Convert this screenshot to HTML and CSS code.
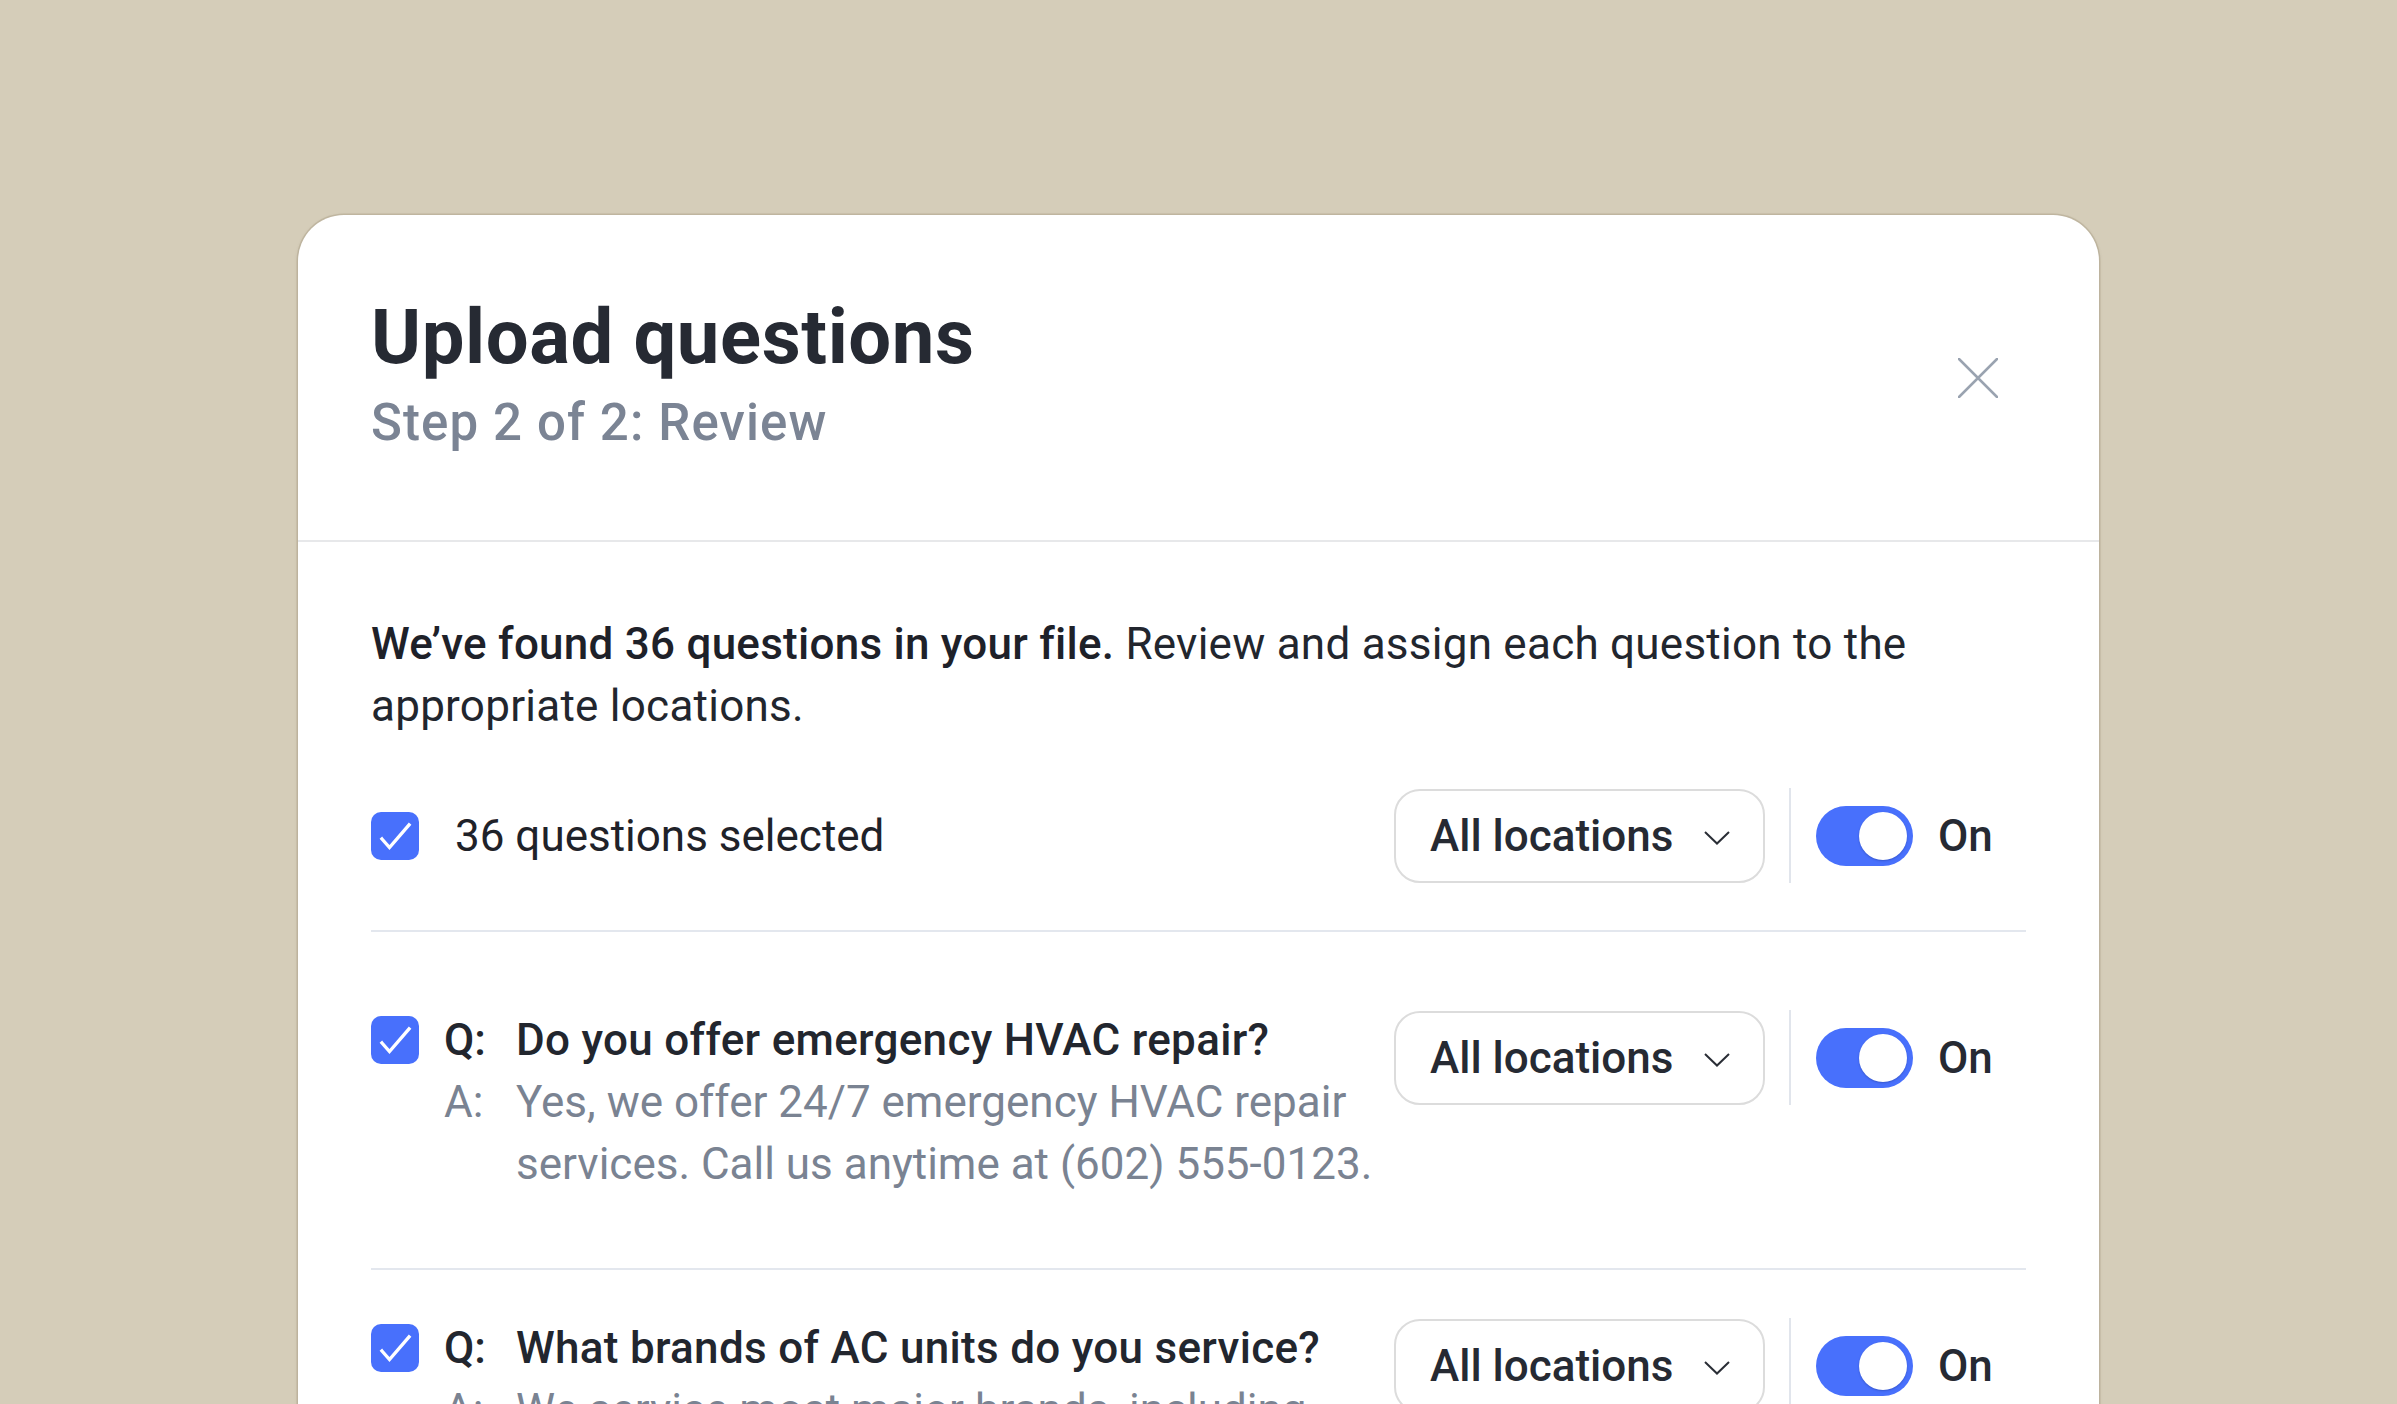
FILE: index.html
```html
<!DOCTYPE html>
<html lang="en">
<head>
<meta charset="utf-8">
<title>Upload questions</title>
<link rel="stylesheet" href="styles.css">
</head>
<body>
<div class="stage">
  <div class="modal">
    <div class="modal-header">
      <div class="heading">
        <h1 class="title">Upload questions</h1>
        <p class="subtitle">Step 2 of 2: Review</p>
      </div>
      <button class="close" aria-label="Close">
        <svg width="40" height="40" viewBox="0 0 40 40"><path d="M1 1 L39 39 M39 1 L1 39" stroke="#9aa3b0" stroke-width="2.5" stroke-linecap="round" fill="none"/></svg>
      </button>
    </div>
    <div class="modal-body">
      <p class="intro"><strong>We’ve found 36 questions in your file.</strong> Review and assign each question to the appropriate locations.</p>

      <div class="select-all">
        <div class="left">
          <span class="checkbox"><svg width="48" height="48" viewBox="0 0 48 48"><path d="M11 27 L18.5 35.5 L38 13" stroke="#fff" stroke-width="3.4" fill="none" stroke-linecap="square"/></svg></span>
          <span class="select-label">36 questions selected</span>
        </div>
        <div class="controls">
          <div class="dropdown"><span>All locations</span><svg width="26" height="14" viewBox="0 0 26 14"><path d="M1 1 L13 12.5 L25 1" stroke="#2a2e36" stroke-width="2" fill="none"/></svg></div>
          <span class="vsep"></span>
          <span class="toggle"><span class="knob"></span></span>
          <span class="toggle-label">On</span>
        </div>
      </div>

      <div class="qa-row first">
        <div class="left">
          <span class="checkbox"><svg width="48" height="48" viewBox="0 0 48 48"><path d="M11 27 L18.5 35.5 L38 13" stroke="#fff" stroke-width="3.4" fill="none" stroke-linecap="square"/></svg></span>
          <div class="qa">
            <div class="q"><span class="lbl">Q:</span><span class="txt">Do you offer emergency HVAC repair?</span></div>
            <div class="a"><span class="lbl">A:</span><span class="txt">Yes, we offer 24/7 emergency HVAC repair services. Call us anytime at (602) 555-0123.</span></div>
          </div>
        </div>
        <div class="controls">
          <div class="dropdown"><span>All locations</span><svg width="26" height="14" viewBox="0 0 26 14"><path d="M1 1 L13 12.5 L25 1" stroke="#2a2e36" stroke-width="2" fill="none"/></svg></div>
          <span class="vsep"></span>
          <span class="toggle"><span class="knob"></span></span>
          <span class="toggle-label">On</span>
        </div>
      </div>

      <div class="qa-row">
        <div class="left">
          <span class="checkbox"><svg width="48" height="48" viewBox="0 0 48 48"><path d="M11 27 L18.5 35.5 L38 13" stroke="#fff" stroke-width="3.4" fill="none" stroke-linecap="square"/></svg></span>
          <div class="qa">
            <div class="q"><span class="lbl">Q:</span><span class="txt">What brands of AC units do you service?</span></div>
            <div class="a"><span class="lbl">A:</span><span class="txt">We service most major brands, including Carrier, Trane, Lennox, Rheem and Goodman.</span></div>
          </div>
        </div>
        <div class="controls">
          <div class="dropdown"><span>All locations</span><svg width="26" height="14" viewBox="0 0 26 14"><path d="M1 1 L13 12.5 L25 1" stroke="#2a2e36" stroke-width="2" fill="none"/></svg></div>
          <span class="vsep"></span>
          <span class="toggle"><span class="knob"></span></span>
          <span class="toggle-label">On</span>
        </div>
      </div>
    </div>
  </div>
</div>
</body>
</html>
```

FILE: styles.css
```css
* { box-sizing: border-box; }

html, body {
  margin: 0;
  padding: 0;
  background: #d5cdb9;
  height: 1404px;
  overflow: hidden;
}

body {
  font-family: Roboto, "Liberation Sans", sans-serif;
  color: #22262e;
}

.stage {
  padding: 215px 0 0 298px;
}

.modal {
  width: 1801px;
  background: #ffffff;
  border-radius: 46px 46px 0 0;
  box-shadow: 0 0 0 1.5px rgba(110, 96, 66, 0.18), 0 1px 4px rgba(80, 70, 40, 0.12);
  min-height: 1300px;
}

.modal-header {
  display: flex;
  justify-content: space-between;
  align-items: flex-start;
  height: 327px;
  padding: 77px 101px 0 73px;
  border-bottom: 2px solid #e7e8ea;
}

.heading { display: flex; flex-direction: column; }

.title {
  margin: 0;
  font-size: 76px;
  line-height: 90px;
  font-weight: 700;
  letter-spacing: 0.6px;
  color: #262a33;
}

.subtitle {
  margin: 11px 0 0;
  font-size: 51px;
  line-height: 60px;
  font-weight: 500;
  color: #7b8494;
  letter-spacing: 1.1px;
}

.close {
  align-self: center;
  margin-top: -77px;
  width: 40px;
  height: 40px;
  padding: 0;
  border: 0;
  background: none;
  display: flex;
}

.modal-body {
  padding: 71px 73px 0 73px;
}

.intro {
  margin: 0;
  font-size: 44px;
  line-height: 62px;
  font-weight: 400;
  letter-spacing: 0.25px;
  color: #22262e;
}

.intro strong { font-weight: 500; color: #1e2129; }

.select-all {
  display: flex;
  justify-content: space-between;
  align-items: center;
  margin-top: 51px;
  padding-bottom: 47px;
  border-bottom: 2px solid #e3e7ee;
}

.left {
  display: flex;
  align-items: flex-start;
  flex: 1;
  min-width: 0;
}

.select-all .left { align-items: center; }

.checkbox {
  flex: none;
  width: 48px;
  height: 48px;
  border-radius: 10px;
  background: #4870fc;
  display: flex;
}

.select-label {
  margin-left: 36px;
  font-size: 44px;
  line-height: 62px;
  color: #1f2229;
}

.controls {
  flex: none;
  display: flex;
  align-items: center;
}

.dropdown {
  width: 371px;
  height: 94px;
  border: 2px solid #dcdcdc;
  border-radius: 26px;
  display: flex;
  align-items: center;
  justify-content: space-between;
  padding: 0 33px 0 34px;
  font-size: 44px;
  font-weight: 500;
  color: #262a33;
}

.dropdown svg { margin-top: 4px; }

.vsep {
  width: 2px;
  height: 95px;
  background: #e1e5ec;
  margin-left: 24px;
}

.toggle {
  margin-left: 25px;
  width: 97px;
  height: 60px;
  border-radius: 30px;
  background: #4870fc;
  display: flex;
  align-items: center;
  justify-content: flex-end;
  padding-right: 6px;
}

.knob {
  width: 48px;
  height: 48px;
  border-radius: 50%;
  background: #ffffff;
  box-shadow: 0 1px 2px rgba(20, 40, 120, 0.35);
}

.toggle-label {
  width: 113px;
  padding-left: 25px;
  font-size: 44px;
  font-weight: 500;
  color: #262a33;
}

.qa-row {
  display: flex;
  justify-content: space-between;
  align-items: flex-start;
  padding: 47px 0 73px;
  border-bottom: 2px solid #e3e7ee;
}

.qa-row.first { padding-top: 77px; }

.qa-row .checkbox { margin-top: 7px; }

.qa-row .controls { margin-top: 1px; }

.qa {
  margin-left: 25px;
  font-size: 44px;
  line-height: 62px;
  flex: 1;
  min-width: 0;
}

.q, .a { display: flex; }

.lbl { flex: none; width: 72px; }

.q { font-weight: 500; color: #22262e; letter-spacing: 0.3px; }

.q .lbl { letter-spacing: 0; }

.a { color: #7a8392; }
```
